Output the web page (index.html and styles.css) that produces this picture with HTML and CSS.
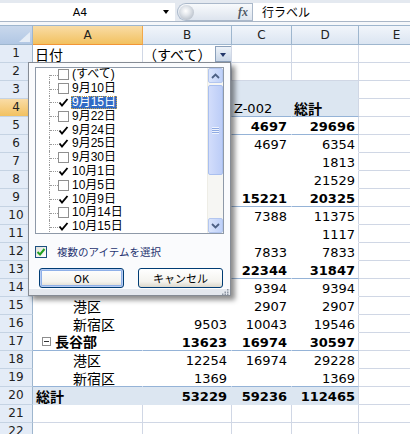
FILE: index.html
```html
<!DOCTYPE html>
<html lang="ja">
<head>
<meta charset="utf-8">
<title>Pivot filter</title>
<link rel="stylesheet" href="styles.css">
</head>
<body>
<div class="fbar">
  <div class="namebox"><span class="nb-text">A4</span><span class="nb-arrow"></span></div>
  <div class="fxzone"><span class="knob"></span><span class="fx">fx</span></div>
  <div class="formula">行ラベル</div>
</div>
<div class="fstrip"></div>

<div class="viewport">
<div class="sheet">
  <div class="corner"><span class="tri"></span></div><div class="ch sel">A</div><div class="ch">B</div><div class="ch">C</div><div class="ch">D</div><div class="ch">E</div>

  <div class="rh">1</div><div class="c j">日付</div><div class="c j b1">（すべて）<span class="fbtn"></span></div><div class="c"></div><div class="c"></div><div class="c"></div>
  <div class="rh">2</div><div class="c"></div><div class="c"></div><div class="c"></div><div class="c"></div><div class="c"></div>
  <div class="rh">3</div><div class="c p hd"></div><div class="c p hd"></div><div class="c p hd"></div><div class="c p d hd"></div><div class="c"></div>
  <div class="rh sel">4</div><div class="c p hd lb j">行ラベル</div><div class="c p hd lb"></div><div class="c p hd lb">Z-002</div><div class="c p d hd lb j b">総計</div><div class="c"></div>
  <div class="rh">5</div><div class="c p lb"></div><div class="c p lb"></div><div class="c p lb n b">4697</div><div class="c p d lb n b">29696</div><div class="c"></div>
  <div class="rh">6</div><div class="c p"></div><div class="c p"></div><div class="c p n">4697</div><div class="c p d n">6354</div><div class="c"></div>
  <div class="rh">7</div><div class="c p"></div><div class="c p"></div><div class="c p n"></div><div class="c p d n">1813</div><div class="c"></div>
  <div class="rh">8</div><div class="c p"></div><div class="c p"></div><div class="c p n"></div><div class="c p d n">21529</div><div class="c"></div>
  <div class="rh">9</div><div class="c p lb"></div><div class="c p lb"></div><div class="c p lb n b">15221</div><div class="c p d lb n b">20325</div><div class="c"></div>
  <div class="rh">10</div><div class="c p"></div><div class="c p"></div><div class="c p n">7388</div><div class="c p d n">11375</div><div class="c"></div>
  <div class="rh">11</div><div class="c p"></div><div class="c p"></div><div class="c p n"></div><div class="c p d n">1117</div><div class="c"></div>
  <div class="rh">12</div><div class="c p"></div><div class="c p"></div><div class="c p n">7833</div><div class="c p d n">7833</div><div class="c"></div>
  <div class="rh">13</div><div class="c p lb"></div><div class="c p lb"></div><div class="c p lb n b">22344</div><div class="c p d lb n b">31847</div><div class="c"></div>
  <div class="rh">14</div><div class="c p"></div><div class="c p"></div><div class="c p n">9394</div><div class="c p d n">9394</div><div class="c"></div>
  <div class="rh">15</div><div class="c p j ind">港区</div><div class="c p"></div><div class="c p n">2907</div><div class="c p d n">2907</div><div class="c"></div>
  <div class="rh">16</div><div class="c p j ind">新宿区</div><div class="c p n">9503</div><div class="c p n">10043</div><div class="c p d n">19546</div><div class="c"></div>
  <div class="rh">17</div><div class="c p lb j b grp"><span class="coll"></span>長谷部</div><div class="c p lb n b">13623</div><div class="c p lb n b">16974</div><div class="c p d lb n b">30597</div><div class="c"></div>
  <div class="rh">18</div><div class="c p j ind">港区</div><div class="c p n">12254</div><div class="c p n">16974</div><div class="c p d n">29228</div><div class="c"></div>
  <div class="rh">19</div><div class="c p lb j ind">新宿区</div><div class="c p lb n">1369</div><div class="c p lb n"></div><div class="c p d lb n">1369</div><div class="c"></div>
  <div class="rh">20</div><div class="c p tot j b tl">総計</div><div class="c p tot n b">53229</div><div class="c p tot n b">59236</div><div class="c p d tot n b">112465</div><div class="c"></div>
  <div class="rh">21</div><div class="c"></div><div class="c"></div><div class="c"></div><div class="c"></div><div class="c"></div>
  <div class="rh">22</div><div class="c"></div><div class="c"></div><div class="c"></div><div class="c"></div><div class="c"></div>
</div>
</div>

<div class="popup">
  <div class="listbox">
    <ul class="tree">
      <li class="item first"><span class="cb"></span><span class="lbl">(すべて)</span></li>
      <li class="item"><span class="cb"></span><span class="lbl">9月10日</span></li>
      <li class="item sel"><svg class="ck" viewBox="0 0 11 11"><path d="M1.5 5.5 L4 8.5 L9.5 2"/></svg><span class="lbl">9月15日</span></li>
      <li class="item"><span class="cb"></span><span class="lbl">9月22日</span></li>
      <li class="item"><svg class="ck" viewBox="0 0 11 11"><path d="M1.5 5.5 L4 8.5 L9.5 2"/></svg><span class="lbl">9月24日</span></li>
      <li class="item"><svg class="ck" viewBox="0 0 11 11"><path d="M1.5 5.5 L4 8.5 L9.5 2"/></svg><span class="lbl">9月25日</span></li>
      <li class="item"><span class="cb"></span><span class="lbl">9月30日</span></li>
      <li class="item"><svg class="ck" viewBox="0 0 11 11"><path d="M1.5 5.5 L4 8.5 L9.5 2"/></svg><span class="lbl">10月1日</span></li>
      <li class="item"><span class="cb"></span><span class="lbl">10月5日</span></li>
      <li class="item"><svg class="ck" viewBox="0 0 11 11"><path d="M1.5 5.5 L4 8.5 L9.5 2"/></svg><span class="lbl">10月9日</span></li>
      <li class="item"><span class="cb"></span><span class="lbl">10月14日</span></li>
      <li class="item"><svg class="ck" viewBox="0 0 11 11"><path d="M1.5 5.5 L4 8.5 L9.5 2"/></svg><span class="lbl">10月15日</span></li>
    </ul>
    <div class="vscroll">
      <div class="sbtn"><svg class="chev" viewBox="0 0 9 6"><path d="M1 5 L4.5 1.5 L8 5"/></svg></div>
      <div class="track"><div class="thumb"><span class="grip"></span></div></div>
      <div class="sbtn"><svg class="chev" viewBox="0 0 9 6"><path d="M1 1 L4.5 4.5 L8 1"/></svg></div>
    </div>
  </div>
  <div class="multi"><span class="mcb"><svg viewBox="0 0 10 10"><path d="M1.5 5 L4 7.5 L8.5 2"/></svg></span><span class="mtext">複数のアイテムを選択</span></div>
  <div class="btns"><button class="btn def">OK</button><button class="btn">キャンセル</button></div>
  <div class="gstrip"><svg class="gdots" viewBox="0 0 7 6"><rect x="5" y="0" width="1.5" height="1.5"/><rect x="2.5" y="2.5" width="1.5" height="1.5"/><rect x="5" y="2.5" width="1.5" height="1.5"/><rect x="0" y="4.5" width="1.5" height="1.5"/><rect x="2.5" y="4.5" width="1.5" height="1.5"/><rect x="5" y="4.5" width="1.5" height="1.5"/></svg></div>
</div>
</body>
</html>
```

FILE: styles.css
```css
* { box-sizing: border-box; margin: 0; padding: 0; }
html, body { width: 410px; height: 434px; overflow: hidden; background: #fff; }
body {
  position: relative;
  font-family: "DejaVu Sans", "Noto Sans CJK JP", sans-serif;
  font-size: 13px;
  color: #000;
}

/* formula bar */
.fbar {
  display: flex;
  height: 22px;
  padding-top: 3px;
  background: #e4e9f0;
  border-bottom: 1px solid #a9b6c7;
}
.namebox {
  width: 175px;
  height: 18px;
  background: #fff;
  display: flex;
  align-items: center;
}
.nb-text {
  width: 160px;
  text-align: center;
  font-family: "DejaVu Sans", sans-serif;
  font-size: 11px;
}
.nb-arrow {
  width: 0; height: 0;
  margin-left: 3px;
  border-left: 3.5px solid transparent;
  border-right: 3.5px solid transparent;
  border-top: 4px solid #000;
}
.fxzone {
  margin-left: 2px;
  width: 75px;
  height: 18px;
  border: 1px solid #aab8ca;
  border-right: none;
  border-radius: 9px 0 0 9px;
  background: linear-gradient(#f8fafc, #dde4ee);
  display: flex;
  align-items: center;
  justify-content: space-between;
}
.knob {
  width: 15px; height: 15px;
  margin-left: 1px;
  border-radius: 50%;
  background: radial-gradient(circle at 45% 40%, #ffffff 0, #e2e6eb 35%, #b5bdc8 80%, #98a3b1 100%);
}
.fx {
  font-family: "Liberation Serif", serif;
  font-style: italic;
  font-weight: bold;
  font-size: 12px;
  color: #505a66;
  margin-right: 4px;
}
.formula {
  flex: 1;
  height: 18px;
  background: #fff;
  border-left: 1px solid #aab8ca;
  padding-left: 9px;
  font-family: "Noto Sans CJK JP", sans-serif;
  font-size: 12px;
  line-height: 18px;
}
.fstrip {
  height: 4px;
  background: #f5f7fa;
  border-bottom: 1px solid #9eb6ce;
}

/* sheet grid */
.viewport {
  width: 410px;
  overflow: hidden;
}
.sheet {
  display: grid;
  grid-template-columns: 33px 110px 89px 60px 67px 76px;
  grid-template-rows: 19px;
  grid-auto-rows: 18px;
  width: 435px;
}
.corner {
  position: relative;
  background: linear-gradient(#c9d8ec, #b1c7e4);
  border-right: 1px solid #9eb6ce;
  border-bottom: 1px solid #9eb6ce;
}
.tri {
  position: absolute;
  right: 2px; bottom: 2px;
  width: 0; height: 0;
  border-left: 11px solid transparent;
  border-bottom: 10px solid #e6edf6;
}
.ch {
  background: linear-gradient(#f1f5fb, #dbe5f2);
  border-right: 1px solid #9eb6ce;
  border-bottom: 1px solid #9eb6ce;
  text-align: center;
  font-size: 12px;
  line-height: 18px;
  color: #222;
}
.ch.sel {
  background: linear-gradient(#f9dca6, #f2c160);
  border-right-color: #f2a84a;
  border-bottom: 1px solid #f29536;
}
.rh {
  background: #e4ecf7;
  border-right: 1px solid #9eb6ce;
  border-bottom: 1px solid #c5d3e3;
  text-align: center;
  font-size: 12px;
  line-height: 17px;
  color: #222;
}
.rh.sel {
  background: linear-gradient(#f9dca6, #f2c160);
  border-right-color: #f29536;
}
.c {
  border-right: 1px solid #d0d7e5;
  border-bottom: 1px solid #d0d7e5;
  padding: 2px 2px 0 2px;
  line-height: 16px;
  white-space: nowrap;
  overflow: hidden;
}
.c.j {
  font-family: "Liberation Sans", "Noto Sans CJK JP", sans-serif;
  font-size: 14px;
  padding-top: 2px;
}
.c.p { border-color: transparent; background: #fff; }
.c.p.d { border-right-color: #d0d7e5; }
.c.p.lb { border-bottom-color: #95b3d7; }
.c.p.hd, .c.p.tot { background: #dce6f1; }
.c.n { text-align: right; padding-right: 4px; }
.c.d.n { padding-right: 3px; }
.c.b { font-weight: bold; }
.c.ind { padding-left: 40px; }
.c.tl { padding-left: 3px; }
.c.grp { padding-left: 9px; display: flex; align-items: center; padding-top: 0; }
.coll {
  position: relative;
  width: 9px; height: 9px;
  margin-right: 4px;
  border: 1px solid #8d8d8d;
  background: #fff;
  flex: none;
}
.coll::after {
  content: "";
  position: absolute;
  left: 1px; top: 3px;
  width: 5px; height: 1px;
  background: #333;
}
.b1 { position: relative; padding-left: 0; }
.fbtn {
  position: absolute;
  right: -1px; top: 1px;
  width: 17px; height: 16px;
  border: 1px solid #8ba0bb;
  background: linear-gradient(#eef3f9, #c9d6e7);
}
.fbtn::after {
  content: "";
  position: absolute;
  left: 4px; top: 6px;
  border-left: 3.5px solid transparent;
  border-right: 3.5px solid transparent;
  border-top: 4px solid #24386a;
}

/* filter popup */
.popup {
  position: absolute;
  left: 28px; top: 62px;
  width: 203px; height: 234px;
  background: #fafbfd;
  border: 1px solid #858b94;
  box-shadow: 4px 4px 5px rgba(0, 0, 0, 0.45);
  display: flex;
  flex-direction: column;
  font-family: "Noto Sans CJK JP", sans-serif;
}
.listbox {
  margin: 4px 0 0 6px;
  width: 189px;
  height: 167px;
  border: 1px solid #8e99a8;
  background: #fff;
  display: flex;
}
.tree {
  flex: 1;
  list-style: none;
  overflow: hidden;
}
.item {
  position: relative;
  height: 13.8px;
  display: flex;
  align-items: center;
  padding-left: 22px;
  font-family: "Liberation Sans", "Noto Sans CJK JP", sans-serif;
  font-size: 12px;
}
.item::before {
  content: "";
  position: absolute;
  left: 13px; top: 0; bottom: 0;
  border-left: 1px dotted #9a9a9a;
}
.item.first::before { top: 50%; }
.item::after {
  content: "";
  position: absolute;
  left: 14px; top: 50%;
  width: 8px;
  border-top: 1px dotted #9a9a9a;
}
.cb {
  width: 11px; height: 11px;
  border: 1px solid #8f8f8f;
  background: #fff;
  flex: none;
}
.ck {
  width: 11px; height: 11px;
  flex: none;
  fill: none;
  stroke: #000;
  stroke-width: 1.9;
}
.lbl {
  margin-left: 2px;
  padding: 0 1px;
  height: 13px;
  line-height: 13px;
  white-space: nowrap;
}
.item.sel .lbl {
  background: #316ac5;
  color: #fff;
  outline: 1px dotted #c9a24a;
  outline-offset: -1px;
}
.vscroll {
  width: 16px;
  display: flex;
  flex-direction: column;
  background: #f6f6f3;
  border-left: 1px solid #eeede6;
}
.sbtn {
  height: 15px;
  background: linear-gradient(90deg, #dbe5fc, #bfd1f9);
  border: 1px solid #b3c6ef;
  border-radius: 2px;
  display: flex;
  align-items: center;
  justify-content: center;
  flex: none;
}
.chev {
  width: 9px; height: 6px;
  fill: none;
  stroke: #4d6185;
  stroke-width: 1.8;
}
.track { flex: 1; padding-top: 2px; }
.thumb {
  height: 90px;
  background: linear-gradient(90deg, #d2ddfb, #bccdf7);
  border: 1px solid #a9bfef;
  border-radius: 2px;
  display: flex;
  align-items: center;
  justify-content: center;
}
.grip {
  width: 7px; height: 7px;
  background: repeating-linear-gradient(#eef3fd 0 1px, #8eaae3 1px 2px);
}
.multi {
  display: flex;
  align-items: center;
  margin: 11px 0 0 6px;
  height: 13px;
}
.mcb {
  width: 12px; height: 12px;
  border: 1px solid #1c5180;
  background: linear-gradient(135deg, #e0e0da, #fff);
  flex: none;
}
.mcb svg {
  display: block;
  width: 10px; height: 10px;
  fill: none;
  stroke: #21a121;
  stroke-width: 2;
}
.mtext {
  margin-left: 10px;
  font-size: 10.5px;
  color: #1f3370;
  white-space: nowrap;
}
.btns {
  display: flex;
  gap: 14px;
  margin: 10px 0 0 10px;
}
.btn {
  width: 85px; height: 20px;
  border: 1px solid #003c74;
  border-radius: 3px;
  background: linear-gradient(#ffffff, #f4f3ee 70%, #dcd8cc);
  font-family: "Noto Sans CJK JP", sans-serif;
  font-size: 11px;
  color: #000;
  line-height: 16px;
}
.btn.def {
  box-shadow: inset 0 0 0 1px #b8cdf3, inset 0 0 0 2px #8fb0e8;
}
.gstrip {
  margin-top: auto;
  height: 7px;
  background: #e4e8ee;
  border-top: 1px solid #fdfdfe;
  position: relative;
}
.gdots {
  position: absolute;
  right: 1px; bottom: 0;
  width: 7px; height: 6px;
  fill: #8d96a3;
}
```
